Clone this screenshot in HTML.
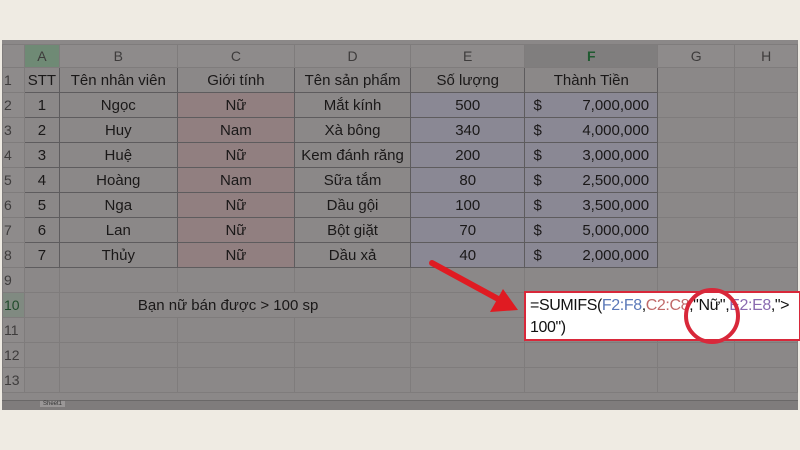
<!DOCTYPE html>
<html><head><meta charset="utf-8"><style>
body{margin:0;width:800px;height:450px;background:#efebe3;position:relative;overflow:hidden;font-family:"Liberation Sans",sans-serif}
#sheet{position:absolute;left:2px;top:40px;width:796px;height:370px;background:#8b8888;overflow:hidden}
table{position:absolute;left:0;top:4px;border-collapse:collapse;table-layout:fixed}
td{height:24px;border:1px solid #7f7c7c;text-align:center;font-size:15px;color:#1a1818;padding:0;white-space:nowrap;overflow:visible}
tr.h td{height:22px;color:#3e3c3c;font-size:14px;background:#8e8b8b}
td.rn{text-align:left;padding-left:1px;color:#3e3c3c;background:#8e8b8b;font-size:14px}
.c{background:#917f80}
.t{border-color:#5e5c5e}
.ef{background:#8a8894}
.m{display:flex;justify-content:space-between;padding:0 8px 0 8px}
#tabs{position:absolute;left:0;top:360px;width:796px;height:10px;background:#7f7c7c;border-top:1px solid #6a6868}
</style></head><body>
<div id="sheet">
<table>
<colgroup><col style="width:22px"><col style="width:35px"><col style="width:118px"><col style="width:118px"><col style="width:116px"><col style="width:115px"><col style="width:133px"><col style="width:78px"><col style="width:63px"></colgroup>
<tr class="h"><td class="rn"></td><td style="background:#6f8a75">A</td><td>B</td><td>C</td><td>D</td><td>E</td><td style="background:#807e7e;color:#1f5a30;font-weight:bold">F</td><td>G</td><td>H</td></tr>
<tr><td class="rn">1</td><td class="t">STT</td><td class="t">Tên nhân viên</td><td class="t">Giới tính</td><td class="t">Tên sản phẩm</td><td class="t">Số lượng</td><td class="t">Thành Tiền</td><td></td><td></td></tr>
<tr><td class="rn">2</td><td class="t">1</td><td class="t">Ngọc</td><td class="t c">Nữ</td><td class="t">Mắt kính</td><td class="t ef">500</td><td class="t ef"><div class="m"><span>$</span><span>7,000,000</span></div></td><td></td><td></td></tr>
<tr><td class="rn">3</td><td class="t">2</td><td class="t">Huy</td><td class="t c">Nam</td><td class="t">Xà bông</td><td class="t ef">340</td><td class="t ef"><div class="m"><span>$</span><span>4,000,000</span></div></td><td></td><td></td></tr>
<tr><td class="rn">4</td><td class="t">3</td><td class="t">Huệ</td><td class="t c">Nữ</td><td class="t">Kem đánh răng</td><td class="t ef">200</td><td class="t ef"><div class="m"><span>$</span><span>3,000,000</span></div></td><td></td><td></td></tr>
<tr><td class="rn">5</td><td class="t">4</td><td class="t">Hoàng</td><td class="t c">Nam</td><td class="t">Sữa tắm</td><td class="t ef">80</td><td class="t ef"><div class="m"><span>$</span><span>2,500,000</span></div></td><td></td><td></td></tr>
<tr><td class="rn">6</td><td class="t">5</td><td class="t">Nga</td><td class="t c">Nữ</td><td class="t">Dầu gội</td><td class="t ef">100</td><td class="t ef"><div class="m"><span>$</span><span>3,500,000</span></div></td><td></td><td></td></tr>
<tr><td class="rn">7</td><td class="t">6</td><td class="t">Lan</td><td class="t c">Nữ</td><td class="t">Bột giặt</td><td class="t ef">70</td><td class="t ef"><div class="m"><span>$</span><span>5,000,000</span></div></td><td></td><td></td></tr>
<tr><td class="rn">8</td><td class="t">7</td><td class="t">Thủy</td><td class="t c">Nữ</td><td class="t">Dầu xả</td><td class="t ef">40</td><td class="t ef"><div class="m"><span>$</span><span>2,000,000</span></div></td><td></td><td></td></tr>
<tr><td class="rn">9</td><td></td><td></td><td></td><td></td><td></td><td></td><td></td><td></td></tr>
<tr><td class="rn" style="background:#808a81;color:#1f4a2a">10</td><td></td><td colspan="3" style="text-align:left;padding-left:78px">Bạn nữ bán được &gt; 100 sp</td><td></td><td></td><td></td><td></td></tr>
<tr><td class="rn">11</td><td></td><td></td><td></td><td></td><td></td><td></td><td></td><td></td></tr>
<tr><td class="rn">12</td><td></td><td></td><td></td><td></td><td></td><td></td><td></td><td></td></tr>
<tr><td class="rn">13</td><td></td><td></td><td></td><td></td><td></td><td></td><td></td><td></td></tr>
</table>
<div id="tabs"><span style="position:absolute;left:38px;top:0;font-size:6px;color:#333;background:#9a9797;padding:0 3px">Sheet1</span></div>
</div>
<div style="position:absolute;left:524px;top:291px;width:269px;height:44px;background:#fff;border:2px solid #d8283a;font-size:16px;letter-spacing:-0.4px;line-height:22px;padding:2px 0 0 4px;box-sizing:content-box;color:#111;white-space:nowrap;overflow:hidden">=SUMIFS(<span style="color:#5a78b8">F2:F8</span>,<span style="color:#c06a6a">C2:C8</span>,"Nữ",<span style="color:#8a6ab0">E2:E8</span>,"&gt;<br>100")</div>
<svg style="position:absolute;left:0;top:0" width="800" height="450">
<line x1="432" y1="263" x2="500" y2="300" stroke="#e01b22" stroke-width="6" stroke-linecap="round"/>
<polygon points="518,310 490,312 503,289" fill="#e01b22"/>
<circle cx="712" cy="316" r="26" fill="none" stroke="#d8283a" stroke-width="4"/>
</svg>
</body></html>
